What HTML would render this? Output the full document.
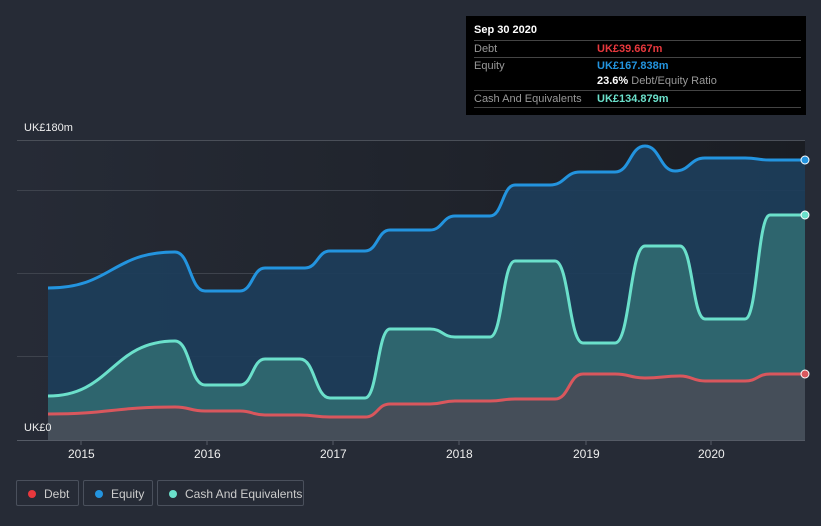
<!DOCTYPE html><html><head><meta charset="utf-8"><style>
body{margin:0;width:821px;height:526px;background:#262b36;font-family:"Liberation Sans",sans-serif;overflow:hidden;position:relative}
.tip{position:absolute;left:466px;top:16px;width:340px;height:99px;background:#000;color:#fff;font-size:11px}
.tip .r{position:absolute;left:8px;width:327px;border-top:1px solid #444;height:16px;line-height:16px;color:#999}
.tip .v{position:absolute;left:123px;font-weight:bold}
.lg{position:absolute;top:480px;height:26px;border:1px solid #4a505c;border-radius:2px;color:#ccc;font-size:12px;line-height:26px;box-sizing:border-box}
.lg i{position:absolute;left:11px;top:9px;width:8px;height:8px;border-radius:50%}
.ax{position:absolute;color:#eee;font-size:11px}
</style></head><body>
<svg width="821" height="526" style="position:absolute;left:0;top:0">
<defs><linearGradient id="bg" x1="0" x2="1" y1="0" y2="0"><stop offset="0" stop-color="#262b36"/><stop offset="1" stop-color="#1a1d23"/></linearGradient></defs>
<rect x="17" y="140" width="788" height="300" fill="url(#bg)"/>
<line x1="17" y1="140.5" x2="805" y2="140.5" stroke="#4a4f58"/>
<g id="g"></g>
<line x1="17" y1="440.5" x2="805" y2="440.5" stroke="#555b66"/>
<g stroke="#555b66"><line x1="81" y1="440" x2="81" y2="445"/><line x1="207" y1="440" x2="207" y2="445"/><line x1="333" y1="440" x2="333" y2="445"/><line x1="459" y1="440" x2="459" y2="445"/><line x1="586" y1="440" x2="586" y2="445"/><line x1="711" y1="440" x2="711" y2="445"/></g>
</svg>
<div class="ax" style="left:24px;top:122px">UK£180m</div>
<div class="ax" style="left:24px;top:422px">UK£0</div>
<div class="ax" style="left:68px;top:447px;font-size:12px">2015</div>
<div class="ax" style="left:194px;top:447px;font-size:12px">2016</div>
<div class="ax" style="left:320px;top:447px;font-size:12px">2017</div>
<div class="ax" style="left:446px;top:447px;font-size:12px">2018</div>
<div class="ax" style="left:573px;top:447px;font-size:12px">2019</div>
<div class="ax" style="left:698px;top:447px;font-size:12px">2020</div>
<div class="tip">
<div style="position:absolute;left:8px;top:8px;font-weight:bold">Sep 30 2020</div>
<div class="r" style="top:24px">Debt<span class="v" style="color:#e8383d">UK£39.667m</span></div>
<div class="r" style="top:41px">Equity<span class="v" style="color:#2394df">UK£167.838m</span></div>
<div class="r" style="top:57px;border:0"><span class="v" style="color:#fff">23.6% <span style="color:#999;font-weight:normal">Debt/Equity Ratio</span></span></div>
<div class="r" style="top:74px;border-bottom:1px solid #444">Cash And Equivalents<span class="v" style="color:#6be0cb">UK£134.879m</span></div>
</div>
<div class="lg" style="left:16px;width:63px"><i style="background:#e8383d"></i><span style="position:absolute;left:27px">Debt</span></div>
<div class="lg" style="left:83px;width:70px"><i style="background:#2394df"></i><span style="position:absolute;left:27px">Equity</span></div>
<div class="lg" style="left:157px;width:147px"><i style="background:#6be0cb"></i><span style="position:absolute;left:27px">Cash And Equivalents</span></div>
<script>
var E=[[48,288],[175,252],[205,291],[240,291],[265,268],[305,268],[330,251],[365,251],[390,230],[430,230],[455,216],[490,216],[515,185],[550,185],[580,172],[615,172],[645,146],[675,171],[705,158],[745,158],[770,160],[805,160]];
var C=[[48,396],[175,341],[205,385],[240,385],[265,359],[300,359],[330,398],[365,398],[390,329],[430,329],[455,337],[490,337],[515,261],[555,261],[583,343],[615,343],[645,246],[680,246],[705,319],[745,319],[770,215],[805,215]];
var D=[[48,414],[175,407],[205,411],[240,411],[265,415],[300,415],[330,417],[365,417],[390,404],[430,404],[455,401],[490,401],[515,399],[555,399],[583,374],[615,374],[645,378],[680,376],[705,381],[745,381],[770,374],[805,374]];
function p(a){var s="M"+a[0][0]+","+a[0][1];for(var i=1;i<a.length;i++){var m=(a[i-1][0]+a[i][0])/2;s+=" C"+m+","+a[i-1][1]+" "+m+","+a[i][1]+" "+a[i][0]+","+a[i][1];}return s;}
var h='<line x1="17" y1="190.5" x2="805" y2="190.5" stroke="#3e434d"/><line x1="17" y1="273.5" x2="805" y2="273.5" stroke="#3e434d"/><line x1="17" y1="356.5" x2="805" y2="356.5" stroke="#3e434d"/>';
[[E,"#1d3d5a"],[C,"#2f6870"],[D,"#474c57"]].forEach(function(x){var d=p(x[0]);h+='<path d="'+d+' L805,440 L48,440Z" fill="'+x[1]+'" opacity="0.93"/>';});
[[E,"#2394df"],[C,"#6be0cb"],[D,"#d9575d"]].forEach(function(x){h+='<path d="'+p(x[0])+'" fill="none" stroke="'+x[1]+'" stroke-width="3"/>';var l=x[0][x[0].length-1];h+='<circle cx="'+l[0]+'" cy="'+l[1]+'" r="4" fill="'+x[1]+'" stroke="#fff" stroke-width="1"/>';});
document.getElementById("g").innerHTML=h;
</script>
</body></html>
